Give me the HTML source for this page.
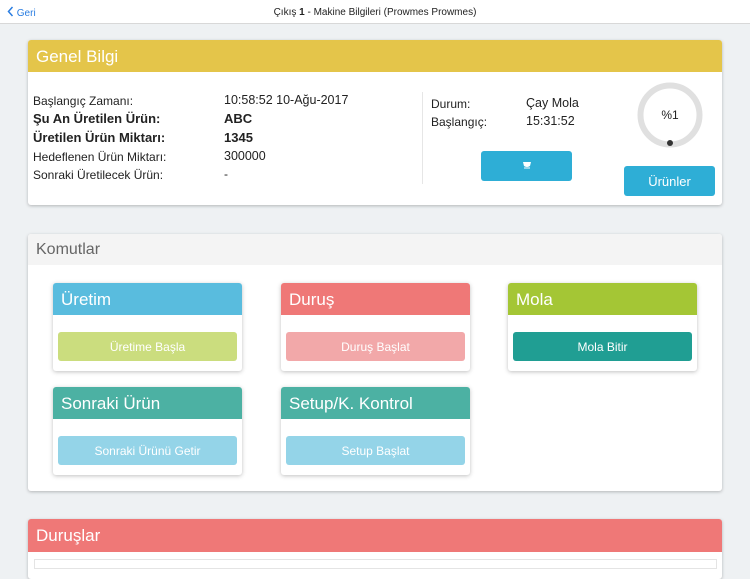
<!DOCTYPE html>
<html><head><meta charset="utf-8"><style>
*{box-sizing:border-box;margin:0;padding:0}
body{width:750px;height:562px;overflow:hidden;background:#eef1f3;font-family:"Liberation Sans",sans-serif;color:#222;position:relative}
.abs{position:absolute}
.nav{left:0;top:0;width:750px;height:24px;background:#fff;border-bottom:1px solid #d8d8d8}
.card{background:#fff;border-radius:3px;box-shadow:0 1px 3px rgba(0,0,0,.25)}
.hd{color:#fff;font-size:17px;padding-left:8px;line-height:34px}
.sub{background:#fff;border-radius:3px;box-shadow:0 1px 4px rgba(0,0,0,.25);width:189px;height:88px;overflow:hidden}
.sub .h{height:32px;color:#fff;font-size:17px;line-height:34px;padding-left:8px}
.sub .b{margin:17px 5px 0;height:29px;border-radius:3px;color:#fff;font-size:12px;text-align:center;line-height:30px}
.t{font-size:12px;position:absolute}
.bd{font-weight:bold;font-size:13px}
</style></head><body>
<div class="abs nav"></div>
<div class="abs" style="left:7px;top:6px;font-size:10px;color:#2a7de1"><svg width="7" height="11" style="vertical-align:-1px"><path d="M5.5 1L1.5 5.5 5.5 10" stroke="#2a7de1" stroke-width="1.5" fill="none"/></svg> Geri</div>
<div class="abs" style="left:0;width:750px;top:7px;text-align:center;font-size:10px">Çıkış <b>1</b> - Makine Bilgileri (Prowmes Prowmes)</div>

<div class="abs card" style="left:28px;top:40px;width:694px;height:165px">
<div class="hd" style="background:#e4c54a;height:32px;border-radius:3px 3px 0 0">Genel Bilgi</div>
</div>
<div class="t" style="left:33px;top:94px">Başlangıç Zamanı:</div><div class="t" style="left:224px;top:93px;font-size:12.5px">10:58:52 10-Ağu-2017</div>
<div class="t bd" style="left:33px;top:111px">Şu An Üretilen Ürün:</div><div class="t bd" style="left:224px;top:111px">ABC</div>
<div class="t bd" style="left:33px;top:130px">Üretilen Ürün Miktarı:</div><div class="t bd" style="left:224px;top:130px">1345</div>
<div class="t" style="left:33px;top:150px">Hedeflenen Ürün Miktarı:</div><div class="t" style="left:224px;top:149px;font-size:12.5px">300000</div>
<div class="t" style="left:33px;top:168px">Sonraki Üretilecek Ürün:</div><div class="t" style="left:224px;top:167px">-</div>
<div class="abs" style="left:422px;top:92px;width:1px;height:92px;background:#e6e6e6"></div>
<div class="t" style="left:431px;top:97px">Durum:</div><div class="t" style="left:526px;top:96px;font-size:12.5px">Çay Mola</div>
<div class="t" style="left:431px;top:115px">Başlangıç:</div><div class="t" style="left:526px;top:114px;font-size:12.5px">15:31:52</div>
<div class="abs" style="left:481px;top:151px;width:91px;height:30px;background:#2eaed6;border-radius:3px"><svg class="abs" style="left:41px;top:10px" width="10" height="8"><path d="M1 1h8l-1 4q-3 2-6 0z" fill="#fff"/><rect x="2" y="6.5" width="6" height="1" fill="#fff"/></svg></div>
<svg class="abs" style="left:636px;top:81px" width="68" height="68"><circle cx="34" cy="34" r="29.5" stroke="#e0e0e0" stroke-width="6" fill="none"/><circle cx="34" cy="62" r="3" fill="#333"/><text x="34" y="38" text-anchor="middle" font-size="12" font-family="Liberation Sans" fill="#222">%1</text></svg>
<div class="abs" style="left:624px;top:166px;width:91px;height:30px;background:#2eaed6;border-radius:3px;color:#fff;font-size:13px;text-align:center;line-height:31px">Ürünler</div>

<div class="abs card" style="left:28px;top:234px;width:694px;height:257px">
<div style="background:#f4f4f4;height:31px;font-size:16px;color:#666;line-height:31px;padding-left:8px;border-radius:3px 3px 0 0">Komutlar</div>
</div>
<div class="abs sub" style="left:53px;top:283px"><div class="h" style="background:#59bcde">Üretim</div><div class="b" style="background:#cbdd7e">Üretime Başla</div></div>
<div class="abs sub" style="left:281px;top:283px"><div class="h" style="background:#ef7877">Duruş</div><div class="b" style="background:#f2a8a9">Duruş Başlat</div></div>
<div class="abs sub" style="left:508px;top:283px"><div class="h" style="background:#a4c635">Mola</div><div class="b" style="background:#209e93">Mola Bitir</div></div>
<div class="abs sub" style="left:53px;top:387px"><div class="h" style="background:#4cb1a3">Sonraki Ürün</div><div class="b" style="background:#94d4e8">Sonraki Ürünü Getir</div></div>
<div class="abs sub" style="left:281px;top:387px"><div class="h" style="background:#4cb1a3">Setup/K. Kontrol</div><div class="b" style="background:#94d4e8">Setup Başlat</div></div>

<div class="abs card" style="left:28px;top:519px;width:694px;height:60px">
<div class="hd" style="background:#ef7877;height:33px;border-radius:3px 3px 0 0">Duruşlar</div>
</div>
<div class="abs" style="left:34px;top:559px;width:683px;height:10px;border:1px solid #e4e4e4"></div>
</body></html>
